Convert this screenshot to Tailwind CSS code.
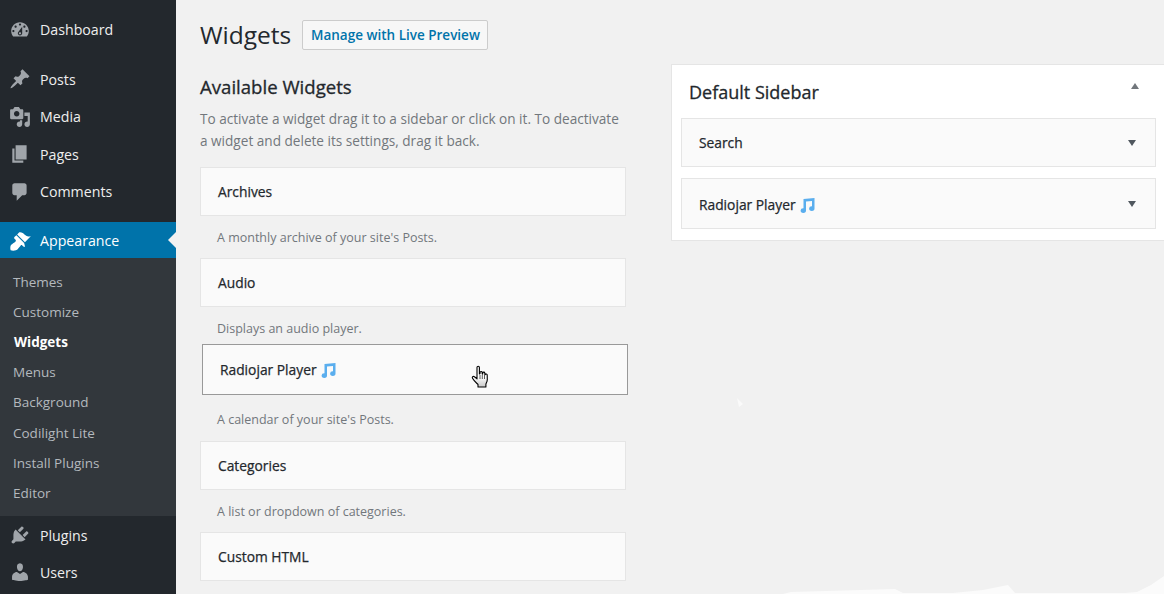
<!DOCTYPE html>
<html lang="en">
<head>
    <meta charset="UTF-8">
    <title>Widgets</title>
    <script src="https://cdn.jsdelivr.net/npm/@tailwindcss/browser@4"></script>
</head>
<body class="bg-[#f1f1f1] font-['Open_Sans',sans-serif] overflow-hidden">
    <div class="relative flex w-[1164px] h-[594px] overflow-hidden">
        <!-- Admin menu -->
        <aside class="w-[176px] h-full shrink-0 bg-[#23282d] text-[14.2px] text-[#eeeeee] pt-[11px]">
            <a class="flex items-center h-[37px] pl-[9px] gap-[9px]">
                <svg class="w-[22px] h-[22px] fill-[#a0a5aa]" viewBox="0 0 20 20"><path d="M3.76 16h12.48c1.1-1.37 1.76-3.11 1.76-5 0-4.42-3.58-8-8-8s-8 3.58-8 8c0 1.89.66 3.63 1.76 5zM10 4c.55 0 1 .45 1 1s-.45 1-1 1-1-.45-1-1 .45-1 1-1zM6 6c.55 0 1 .45 1 1s-.45 1-1 1-1-.45-1-1 .45-1 1-1zm8 0c.55 0 1 .45 1 1s-.45 1-1 1-1-.45-1-1 .45-1 1-1zm-5.37 5.55L12 7v6c0 1.1-.9 2-2 2s-2-.9-2-2c0-.57.24-1.08.63-1.45zM4 10c.55 0 1 .45 1 1s-.45 1-1 1-1-.45-1-1 .45-1 1-1zm12 0c.55 0 1 .45 1 1s-.45 1-1 1-1-.45-1-1 .45-1 1-1zm-5 3c0-.55-.45-1-1-1s-1 .45-1 1 .45 1 1 1 1-.45 1-1z"/></svg>
                <span>Dashboard</span>
            </a>
            <div class="mt-[12.5px]">
                <a class="flex items-center h-[37.5px] pl-[9px] gap-[9px]">
                    <svg class="w-[22px] h-[22px] fill-[#a0a5aa]" viewBox="0 0 20 20"><path d="M10.44 3.02l1.82-1.82 6.36 6.35-1.83 1.82c-1.05-.68-2.48-.57-3.41.36l-.75.75c-.92.93-1.04 2.35-.35 3.41l-1.83 1.82-2.41-2.41-2.8 2.79c-.42.42-3.38 2.71-3.8 2.29s1.86-3.39 2.28-3.81l2.79-2.79L4.1 9.36l1.83-1.82c1.05.69 2.48.57 3.4-.36l.75-.75c.93-.92 1.05-2.35.36-3.41z"/></svg>
                    <span>Posts</span>
                </a>
                <a class="flex items-center h-[37.5px] pl-[9px] gap-[9px]">
                    <svg class="w-[22px] h-[22px] fill-[#a0a5aa]" viewBox="0 0 20 20"><path d="M13 11V4c0-.55-.45-1-1-1h-1.67L9 1H5L3.67 3H2c-.55 0-1 .45-1 1v7c0 .55.45 1 1 1h10c.55 0 1-.45 1-1zM7 4.5c1.38 0 2.5 1.12 2.5 2.5S8.38 9.5 7 9.5 4.5 8.38 4.5 7 5.62 4.5 7 4.5zM14 6h5v10.5c0 1.38-1.12 2.5-2.5 2.5S14 17.88 14 16.5s1.12-2.5 2.5-2.5c.17 0 .34.02.5.05V9h-3V6zm-4 8.05V13h2v3.5c0 1.38-1.12 2.5-2.5 2.5S7 17.88 7 16.5 8.12 14 9.5 14c.17 0 .34.02.5.05z"/></svg>
                    <span>Media</span>
                </a>
                <a class="flex items-center h-[37.5px] pl-[9px] gap-[9px]">
                    <svg class="w-[22px] h-[22px] fill-[#a0a5aa]" viewBox="0 0 20 20"><path d="M6 15V2h10v13H6zm-1 1h8v2H3V5h2v11z"/></svg>
                    <span>Pages</span>
                </a>
                <a class="flex items-center h-[37.5px] pl-[9px] gap-[9px]">
                    <svg class="w-[22px] h-[22px] fill-[#a0a5aa]" viewBox="0 0 20 20"><path d="M5 2h9c1.1 0 2 .9 2 2v7c0 1.1-.9 2-2 2h-2l-5 5v-5H5c-1.1 0-2-.9-2-2V4c0-1.1.9-2 2-2z"/></svg>
                    <span>Comments</span>
                </a>
            </div>
            <a class="relative flex items-center h-[36px] mt-[11.5px] pt-[2px] pl-[9px] gap-[9px] bg-[#0073aa] text-white">
                <svg class="w-[22px] h-[22px] fill-white" viewBox="0 0 20 20"><path d="M14.48 11.06L7.41 3.99l1.5-1.5c.5-.56 2.3-.47 3.51.32 1.21.8 1.43 1.28 2.91 2.1 1.18.64 2.45 1.26 4.45.85zm-.71.71L6.7 4.7 4.93 6.47c-.39.39-.39 1.02 0 1.41l1.06 1.06c.39.39.39 1.03 0 1.42-.6.6-1.43 1.11-2.21 1.69-.35.26-.7.53-1.01.84C1.43 13.23.78 15.78 1.53 18.47c2.69.75 5.24.1 6.58-1.24.31-.31.58-.66.84-1.01.58-.78 1.09-1.61 1.69-2.21.39-.39 1.03-.39 1.42 0l1.06 1.06c.39.39 1.02.39 1.41 0z"/></svg>
                <span>Appearance</span>
                <span class="absolute right-0 top-[10px] w-0 h-0 border-y-[8px] border-y-transparent border-r-[8px] border-r-[#f1f1f1]"></span>
            </a>
            <div class="bg-[#32373c] h-[258px] pt-[9.2px] text-[13.5px] text-[#b4b9be]">
                <a class="flex items-center h-[30.1px] pl-[13px]">Themes</a>
                <a class="flex items-center h-[30.1px] pl-[13px]">Customize</a>
                <a class="flex items-center h-[30.1px] pl-[14px] font-bold text-white">Widgets</a>
                <a class="flex items-center h-[30.1px] pl-[13px]">Menus</a>
                <a class="flex items-center h-[30.1px] pl-[13px]">Background</a>
                <a class="flex items-center h-[30.1px] pl-[13px]">Codilight Lite</a>
                <a class="flex items-center h-[30.1px] pl-[13px]">Install Plugins</a>
                <a class="flex items-center h-[30.1px] pl-[13px]">Editor</a>
            </div>
            <a class="flex items-center h-[37.5px] pt-[1px] pl-[9px] gap-[9px]">
                <svg class="w-[22px] h-[22px] fill-[#a0a5aa]" viewBox="0 0 20 20"><path d="M13.11 4.36L9.87 7.6 8 5.73l3.24-3.24c.35-.34 1.05-.2 1.56.32.52.51.66 1.21.31 1.55zm-8 1.77l.91-1.12 9.01 9.01-1.19.84c-.71.71-2.63 1.16-3.82 1.16H6.14L4.9 17.26c-.59.59-1.54.59-2.12 0-.59-.58-.59-1.53 0-2.12l1.24-1.24v-3.88c0-1.13.4-3.19 1.09-3.89zm7.26 3.97l3.24-3.24c.34-.35 1.04-.21 1.55.31.52.51.66 1.21.31 1.55l-3.24 3.25z"/></svg>
                <span>Plugins</span>
            </a>
            <a class="flex items-center h-[37.5px] pl-[9px] gap-[9px]">
                <svg class="w-[22px] h-[22px] fill-[#a0a5aa]" viewBox="0 0 20 20"><path d="M10 9.25c-2.27 0-2.73-3.44-2.73-3.44C7 4.02 7.82 2 9.97 2c2.16 0 2.98 2.02 2.71 3.81 0 0-.41 3.44-2.68 3.44zm0 2.57L12.72 10c2.39 0 4.52 2.33 4.52 4.53v2.49s-3.65 1.13-7.24 1.13c-3.65 0-7.24-1.13-7.24-1.13v-2.49c0-2.25 1.94-4.48 4.47-4.48z"/></svg>
                <span>Users</span>
            </a>
        </aside>

        <!-- Main content -->
        <main class="flex-1 pl-[24px] pt-[20px] min-w-0 text-[#23282d]">
            <div class="flex items-center h-[30px]">
                <h1 class="w-[102px] shrink-0 text-[24.5px] leading-[30px]">Widgets</h1>
                <a class="flex items-center w-[186px] h-[30px] pl-[8px] bg-[#f7f7f7] border border-[#cccccc] rounded-[2px] text-[13.5px] font-semibold whitespace-nowrap text-[#0073aa]">Manage with Live Preview</a>
            </div>
            <div class="flex mt-[14px]">
                <!-- Available widgets -->
                <section class="w-[426px] shrink-0">
                    <h2 class="text-[18.6px] [-webkit-text-stroke:0.3px] leading-[24px] mt-[11px]">Available Widgets</h2>
                    <p class="mt-[9px] text-[13.6px] leading-[22px] text-[#72777c] whitespace-nowrap">To activate a widget drag it to a sidebar or click on it. To deactivate<br>a widget and delete its settings, drag it back.</p>
                    <div class="mt-[15px] flex items-center h-[49px] pt-[1px] pl-[17px] bg-[#fafafa] border border-[#e5e5e5] text-[13.8px] [-webkit-text-stroke:0.25px]">Archives</div>
                    <p class="flex items-center h-[42px] pt-[2px] pl-[17px] text-[12.5px] text-[#72777c]">A monthly archive of your site's Posts.</p>
                    <div class="flex items-center h-[49px] pt-[1px] pl-[17px] bg-[#fafafa] border border-[#e5e5e5] text-[13.8px] [-webkit-text-stroke:0.25px]">Audio</div>
                    <p class="flex items-center h-[37px] pt-[8px] pl-[17px] text-[12.5px] text-[#72777c]">Displays an audio player.</p>
                    <div class="flex items-center gap-[3px] h-[51px] ml-[2px] pt-[2px] pl-[17px] -mr-[2px] bg-[#fafafa] border border-[#999999] text-[13.8px] [-webkit-text-stroke:0.25px]">
                        Radiojar Player
                        <svg class="w-[16px] h-[16px] -mt-[1px] fill-[#5aaeee]" viewBox="0 0 16 16"><path d="M4.500 2 15.500 1V11.500a2.700 2.300 0 1 1-2.500-2.200V4L7 4.600V13.500a2.700 2.300 0 1 1-2.500-2.200z"/></svg>
                    </div>
                    <p class="flex items-center h-[46px] pt-[5px] pl-[17px] text-[12.5px] text-[#72777c]">A calendar of your site's Posts.</p>
                    <div class="flex items-center h-[49px] pt-[1px] pl-[17px] bg-[#fafafa] border border-[#e5e5e5] text-[13.8px] [-webkit-text-stroke:0.25px]">Categories</div>
                    <p class="flex items-center h-[42px] pt-[2px] pl-[17px] text-[12.5px] text-[#72777c]">A list or dropdown of categories.</p>
                    <div class="flex items-center h-[49px] pt-[1px] pl-[17px] bg-[#fafafa] border border-[#e5e5e5] text-[13.8px] [-webkit-text-stroke:0.25px]">Custom HTML</div>
                </section>

                <!-- Default Sidebar -->
                <section class="ml-[45px] w-[510px] shrink-0 h-[177px] bg-white border border-[#e5e5e5] pl-[9px]">
                    <div class="flex items-center justify-between h-[53px] pt-[2px] pl-[8px] pr-[41px]">
                        <h2 class="text-[18px] [-webkit-text-stroke:0.3px]">Default Sidebar</h2>
                        <span class="w-0 h-0 -mt-[13px] border-x-[4.5px] border-x-transparent border-b-[6px] border-b-[#72777c]"></span>
                    </div>
                    <div class="flex items-center justify-between w-[475px] h-[49px] pt-[1px] pl-[17px] pr-[19px] bg-[#fafafa] border border-[#e5e5e5] text-[13.8px] [-webkit-text-stroke:0.25px]">
                        Search
                        <span class="w-0 h-0 border-x-[4.5px] border-x-transparent border-t-[6px] border-t-[#50575e]"></span>
                    </div>
                    <div class="flex items-center justify-between w-[475px] h-[51px] mt-[11px] pt-[3px] pl-[17px] pr-[19px] bg-[#fafafa] border border-[#e5e5e5] text-[13.8px] [-webkit-text-stroke:0.25px]">
                        <span class="flex items-center gap-[3px]">
                            Radiojar Player
                            <svg class="w-[16px] h-[16px] -mt-[1px] fill-[#5aaeee]" viewBox="0 0 16 16"><path d="M4.500 2 15.500 1V11.500a2.700 2.300 0 1 1-2.500-2.200V4L7 4.600V13.500a2.700 2.300 0 1 1-2.500-2.200z"/></svg>
                        </span>
                        <span class="w-0 h-0 -mt-[2px] border-x-[4.5px] border-x-transparent border-t-[6px] border-t-[#50575e]"></span>
                    </div>
                </section>
            </div>
        </main>

        <!-- Hand cursor over the dragged widget -->
        <svg class="absolute left-[471px] top-[365px] w-[19px] h-[24px]" viewBox="0 0 19 24">
            <defs>
                <linearGradient id="hand" x1="0" y1="0" x2="0" y2="1">
                    <stop offset="0.5" stop-color="#ffffff"/>
                    <stop offset="1" stop-color="#c8c8c8"/>
                </linearGradient>
            </defs>
            <path d="M6 2.500c0-1.600 2.400-1.600 2.400 0V9l.6-.2V7.500c0-1.300 2-1.300 2.200 0V9l.5.1V8c.1-1.200 2-1.200 2.100 0v1.500l.5.1c.1-1 1.800-.9 1.900.3l.1 4.600c0 2-.8 3.200-1.400 4.500V22H7v-2.500C5.500 18 3 16 1.500 13.300c-.7-1.300.6-2.500 1.900-1.500L6 13.800z" fill="url(#hand)" stroke="black" stroke-width="1.100" stroke-linejoin="round"/>
            <path d="M9 10v4M11.300 10v4M13.500 10v4" stroke="#333333" stroke-width=".8"/>
        </svg>

        <!-- Painted-over marks at the bottom right -->
        <svg class="absolute left-0 top-0 w-[1164px] h-[594px] pointer-events-none" viewBox="0 0 1164 594">
            <path d="M737 398l6 6-4 3z" fill="#fafafa"/>
            <path d="M783 594l8-2 70-2 34-1 8 4 50 0 30-3 25-5 7 8 110 0 12-1 14-7 13-9v19z" fill="#fbfbfb"/>
        </svg>
    </div>
</body>
</html>
